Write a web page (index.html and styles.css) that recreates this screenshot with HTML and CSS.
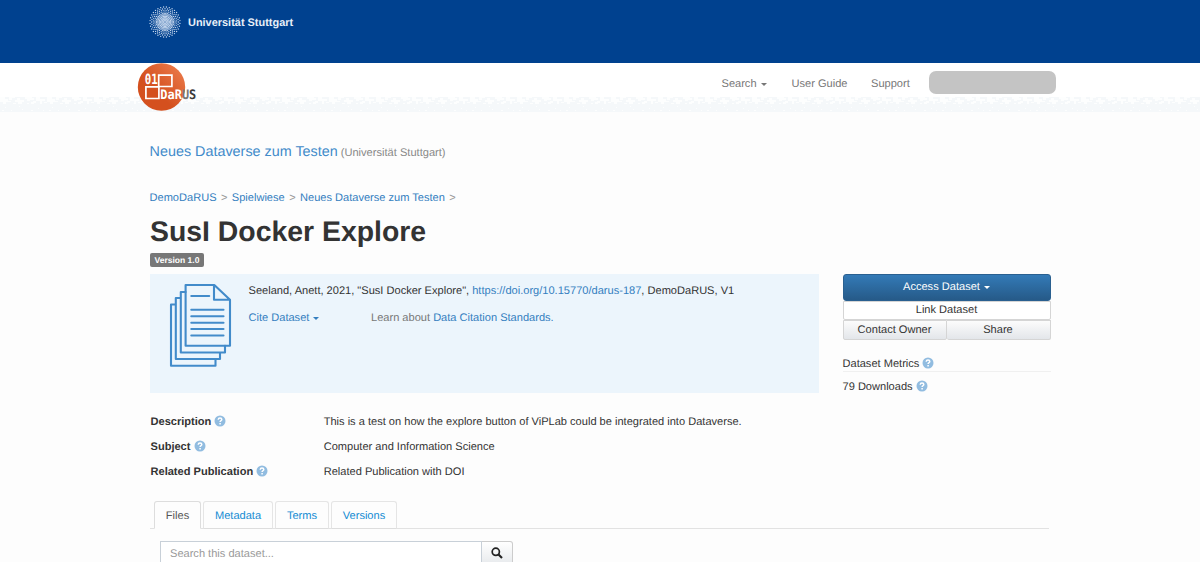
FILE: index.html
```html
<!DOCTYPE html>
<html lang="en">
<head>
<meta charset="utf-8">
<title>SusI Docker Explore</title>
<link rel="stylesheet" href="styles.css">
</head>
<body>
<svg class="defs" width="0" height="0" aria-hidden="true">
  <symbol id="help" viewBox="0 0 12 12">
    <circle cx="6" cy="6" r="5.5" fill="#91bce0"/>
    <path d="M4.2 4.7Q4.3 3.1 6 3.1Q7.8 3.1 7.8 4.5Q7.8 5.3 6.8 5.8Q6.1 6.2 6.1 7M6.1 8V9.4" fill="none" stroke="#fff" stroke-width="1.5"/>
  </symbol>
</svg>
<header class="brandbar">
  <svg class="dots" viewBox="-17 -17 34 34" aria-hidden="true">
    <circle r="9" fill="#7f9fca" opacity=".35"/>
    <circle r="4.5" fill="#c3d5ec" opacity=".4"/>
    <g class="rings">
      <circle r="1.5" pathLength="8"/>
      <circle r="3" pathLength="16"/>
      <circle r="4.4" pathLength="24"/>
      <circle r="5.8" pathLength="32" class="odd"/>
      <circle r="7.2" pathLength="32"/>
      <circle r="8.6" pathLength="32" class="odd"/>
      <circle r="10.1" pathLength="32"/>
      <circle r="11.7" pathLength="32" class="odd"/>
      <circle r="13.3" pathLength="32"/>
      <circle r="15" pathLength="32" class="odd"/>
    </g>
  </svg>
  <span class="uni">Universität Stuttgart</span>
</header>
<nav class="nav">
  <svg class="darus" viewBox="0 0 62 48" role="img" aria-label="DaRUS">
    <defs><linearGradient id="og" x1="0" y1="1" x2="1" y2="0"><stop offset=".4" stop-color="#d4501e"/><stop offset="1" stop-color="#ee8152"/></linearGradient></defs>
    <circle cx="24.5" cy="24" r="23.7" fill="url(#og)"/>
    <g fill="none" stroke="#fff" stroke-width="1.7"><path d="M21.7 12.2H34.9V23.5H21.7ZM8.9 23.8H21.9V35.5H8.9Z"/></g>
    <text x="7.7" y="21.3" class="digits" textLength="13" lengthAdjust="spacingAndGlyphs">01</text>
    <text x="23.3" y="36" class="word" textLength="36" lengthAdjust="spacingAndGlyphs">DaR<tspan fill="#777">U</tspan><tspan fill="#3a3a3a">S</tspan></text>
  </svg>
  <span class="links"><a class="l1">Search <i class="caret"></i></a><a class="l2">User Guide</a><a class="l3">Support</a></span>
  <span class="account"></span>
</nav>
<svg class="texture" width="1200" height="15" aria-hidden="true">
  <defs><pattern id="flecks" width="47" height="15" patternUnits="userSpaceOnUse">
    <rect width="47" height="15" fill="#f5f8fa"/>
    <path fill="#fdfefe" d="M0 0h5v2h3v2h3v1h-5v2h-3v-2H0ZM9 0h6v1h-3v2h-3ZM17 1h3v2h4v2h-2v2h-4v-2h-3v-2h2ZM25 0h7v1h2v2h-4v1h-3v-2h-2ZM33 4h3v2h-2v1h-3v-2h2ZM36 0h4v2h5v2h-3v3h-2v-3h-4ZM44 5h3v1h-3ZM13 6h3v1h-3ZM27 6h2v1h-2ZM5 10h1v1h-1ZM19 9h1v1h-1ZM38 11h1v1h-1ZM2 13h2v1h-2ZM11 13h1v1h-1ZM22 12h1v1h-1ZM31 13h2v1h-2ZM43 13h1v1h-1Z"/>
  </pattern></defs>
  <rect width="1200" height="15" fill="url(#flecks)"/>
</svg>
<main class="page">
  <div class="owner"><a>Neues Dataverse zum Testen</a> <small>(Universität Stuttgart)</small></div>
  <div class="crumbs"><a>DemoDaRUS</a><b>&gt;</b><a>Spielwiese</a><b>&gt;</b><a>Neues Dataverse zum Testen</a><b>&gt;</b></div>
  <h1>SusI Docker Explore</h1>
  <span class="version">Version 1.0</span>
  <div class="top">
    <section class="citation">
      <svg class="files" viewBox="0 0 64 86" aria-hidden="true">
        <g fill="none" stroke="#428bca" stroke-width="2.1" stroke-linejoin="round" stroke-linecap="round">
          <path d="M16.6 3H45.3L61 17.8V63.7H16.6ZM45 3V17.8H61"/>
          <path d="M16.6 10H11.8V70.5H56V63.7M11.8 16H6.8V77H51V70.5M6.8 22.5H2V83.7H46.5V77"/>
          <path d="M22.3 14H40.2M22.3 27.8H54.5M22.3 34.3H54.5M22.3 40.7H54.5M22.3 47H54.5M22.3 53.5H54.5"/>
        </g>
      </svg>
      <div class="cite">
        <p>Seeland, Anett, 2021, "SusI Docker Explore", <a>https://doi.org/10.15770/darus-187</a>, DemoDaRUS, V1</p>
        <div class="citerow"><a class="citebtn">Cite Dataset <i class="caret"></i></a><span>Learn about <a>Data Citation Standards.</a></span></div>
      </div>
    </section>
    <aside>
      <div class="btn primary">Access Dataset <i class="caret"></i></div>
      <div class="btn link">Link Dataset</div>
      <div class="pair"><div class="btn">Contact Owner</div><div class="btn">Share</div></div>
      <div class="metrics">Dataset Metrics <svg class="help"><use href="#help"/></svg></div>
      <div class="downloads">79 Downloads <svg class="help"><use href="#help"/></svg></div>
    </aside>
  </div>
  <dl class="meta">
    <dt>Description <svg class="help"><use href="#help"/></svg></dt><dd>This is a test on how the explore button of ViPLab could be integrated into Dataverse.</dd>
    <dt>Subject <svg class="help"><use href="#help"/></svg></dt><dd>Computer and Information Science</dd>
    <dt>Related Publication <svg class="help"><use href="#help"/></svg></dt><dd>Related Publication with DOI</dd>
  </dl>
  <div class="tabs"><a class="tab active">Files</a><a class="tab t2">Metadata</a><a class="tab t3">Terms</a><a class="tab t4">Versions</a></div>
  <div class="search"><span class="field">Search this dataset...</span><span class="go"><svg width="12" height="12" viewBox="0 0 12 12"><circle cx="4.8" cy="4.8" r="3.6" fill="none" stroke="#222" stroke-width="1.7"/><path d="M7.5 7.5L11 11" stroke="#222" stroke-width="2.1"/></svg></span></div>
</main>
</body>
</html>
```
FILE: styles.css
```css
* { box-sizing: border-box; }
html, body { height: 562px; overflow: hidden; }
body { margin: 0; background: #fdfdfd; color: #333; font: 11.07px/16px "Liberation Sans", Arial, sans-serif; text-rendering: geometricPrecision; }
a { color: #337ebf; text-decoration: none; }
.defs { display: block; height: 0; }
.brandbar { height: 63px; background: #00418f; padding: 5px 0 0 148px; display: flex; align-items: flex-start; }
.dots { width: 34px; height: 34px; }
.rings { fill: none; stroke: #c3d5ec; stroke-width: 1.4; stroke-linecap: round; stroke-dasharray: 0 1; }
.rings .odd { stroke-dashoffset: .5; }
.uni { color: #e8eff8; font: bold 10.95px/16px "Liberation Sans", Arial, sans-serif; padding: 10px 0 0 6px; }
.nav { height: 34px; background: #fff; display: flex; align-items: flex-start; position: relative; z-index: 1; }
.darus { width: 62px; height: 48px; margin-left: 137px; flex: none; }
.digits { font: bold 14px "DejaVu Sans Mono", monospace; fill: #fff; }
.word { font: bold 13px "DejaVu Sans Mono", monospace; fill: #fff; }
.links { display: flex; margin-left: 522.5px; padding-top: 13px; }
.links a { color: #777; }
.l1 { width: 70px; }
.l2 { width: 79.5px; }
.l3 { width: 58px; }
.caret { display: inline-block; border: 3.5px solid transparent; border-top-color: currentColor; border-bottom: 0; vertical-align: 1.5px; margin-left: 1px; }
.account { width: 127px; height: 23px; margin-top: 8px; border-radius: 7px; background: #c4c4c4; }
.texture { display: block; }
.page { margin-left: 150px; width: 901px; }
.owner { padding-top: 30px; height: 78px; font-size: 14.36px; line-height: 20px; margin-left: -.4px; }
.owner a { color: #428bca; }
.owner small { font-size: 11.1px; color: #888; margin-left: -1px; }
.crumbs { display: flex; height: 24px; margin-left: -.5px; }
.crumbs b { font-weight: normal; color: #999; font-size: 11px; width: 15.3px; text-align: center; }
h1 { margin: 0; font-size: 28.4px; line-height: 36px; height: 39px; }
.version { display: block; width: 54px; height: 14px; border-radius: 2px; background: #777; color: #fff; text-align: center; font: bold 8.5px/14px "Liberation Sans", Arial, sans-serif; }
.top { display: flex; height: 140px; margin-top: 7px; }
.citation { width: 669px; height: 119px; background: #ecf5fc; display: flex; padding: 8px 0 0 19px; }
.files { width: 64px; height: 86px; }
.cite { padding-left: 15.5px; }
.cite p { margin: 0; height: 28px; padding-top: 1px; }
.citerow { display: flex; color: #777; }
.citebtn { width: 122.5px; }
aside { margin-left: 23.5px; width: 208px; }
.btn { height: 20px; line-height: 18px; text-align: center; border: 1px solid #d5d5d5; background: linear-gradient(#fcfcfc, #e3e6ea); border-radius: 0 0 2px 2px; }
.primary { height: 27px; line-height: 25px; color: #fff; border-color: #2a6090; background: linear-gradient(#337ab7, #265a88); border-radius: 3px; }
.link { background: #fff; line-height: 17px; height: 19px; }
.pair { display: grid; grid-template-columns: 104px 104px; }
.pair .btn + .btn { border-left: 0; }
.metrics { height: 32px; padding-top: 16px; border-bottom: 1px solid #f0f0f0; }
.downloads { padding-top: 7px; }
.help { width: 12px; height: 12px; vertical-align: -2px; }
.meta { margin: 0; display: grid; grid-template-columns: 173.7px 1fr; grid-auto-rows: 25.2px; height: 87px; }
.meta dt { font-weight: bold; padding-left: .5px; }
.meta dd { margin: 0; }
.tabs { width: 899px; height: 28px; display: flex; gap: 2px; padding-left: 4px; border-bottom: 1px solid #e2e2e2; }
.tab { height: 28px; line-height: 28px; border: 1px solid #e5e5e5; border-bottom-color: #ddd; border-radius: 3px 3px 0 0; text-align: center; color: #128bd3; width: 70px; }
.active { width: 47px; color: #555; border-color: #ddd; border-bottom-color: #fdfdfd; background: #fdfdfd; }
.t3 { width: 54px; }
.t4 { width: 66px; }
.search { display: flex; margin: 12px 0 0 10px; width: 353px; }
.field { width: 322px; height: 27px; border: 1px solid #c8d0d8; background: #fff; color: #999; padding: 0 9px; line-height: 25px; }
.go { width: 31px; height: 27px; border: 1px solid #ccc; border-left: 0; border-radius: 0 3px 3px 0; background: linear-gradient(#fff, #e4e7ea); padding: 5px 0 0 9px; line-height: 0; }
```
